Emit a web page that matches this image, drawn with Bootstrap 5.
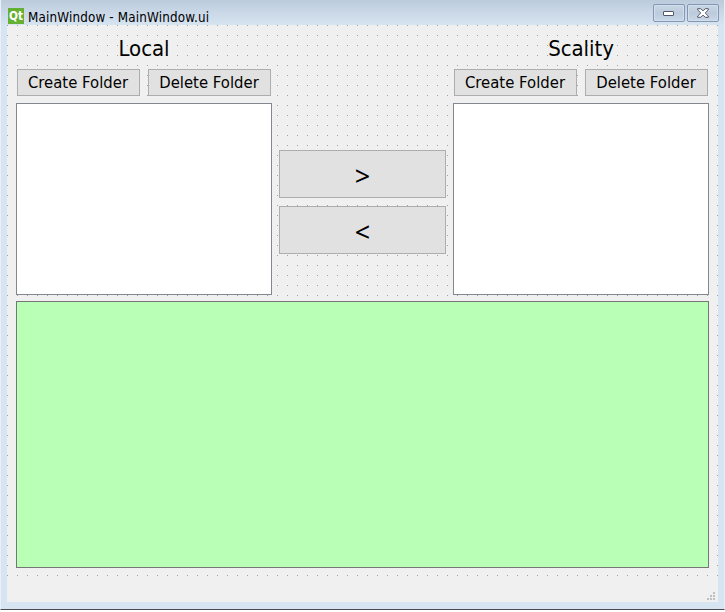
<!DOCTYPE html>
<html lang="en">
<head>
<meta charset="utf-8">
<title>MainWindow - MainWindow.ui</title>
<link href="https://cdn.jsdelivr.net/npm/bootstrap@5.3.0/dist/css/bootstrap.min.css" rel="stylesheet">
<style>
body{background:#fff;font-family:"DejaVu Sans Condensed","DejaVu Sans",sans-serif;font-stretch:condensed;color:#000;line-height:1}
.win{width:725px;height:610px;background:linear-gradient(#bccbdb,#d7e4f2 25px);border-bottom:1px solid #4b4b4f;border-left:1px solid #e9f0f8;border-right:1px solid #e4ecf6;padding:0 6px 7px 6px}
.titlebar{height:25px;margin-right:-1px}
.qt{width:16px;height:16px;margin:8px 4px 0 1px}
.caption{font-size:13.3px;letter-spacing:.17px;margin-top:11px;white-space:nowrap}
.ctl{width:32px;height:18px;margin-top:4px;border:1px solid #8595b4;border-radius:2px;background:linear-gradient(#c9d6e4,#bccbdc 50%,#c9d8e8);box-shadow:inset 0 0 0 1px #d3dfeb}
.client{position:relative;height:577px;background-color:#f0f0f0;padding:8px 9px 0}
.side{width:256px}
.head{height:36px;font-size:22px;padding-top:5px;letter-spacing:-.05px}
.tools{height:27px;padding:0 1px}
.tool{width:123px;padding:2px 1px 0 0;border:1px solid #adadad;border-radius:0;background:#e1e1e1;font-size:16.5px;letter-spacing:.02px;color:#000;line-height:1}
.pane{height:192px;margin-top:7px;background:#fff;border:1px solid #828790}
.mid{width:167px;padding-top:117px}
.move{height:48px;padding:3px 0 0;border:1px solid #adadad;border-radius:0;background:#e1e1e1;color:#000;font-family:"Noto Sans",sans-serif;font-size:27px;line-height:1}
.log{height:267px;margin-top:6px;background:#baffb6;border:1px solid #767676}
.dots{position:absolute;left:0;top:0}
.body-grid{position:relative}
.grip{position:absolute;right:3px;bottom:2px}
</style>
</head>
<body>
<div class="win">
 <header class="titlebar d-flex align-items-start">
  <svg class="qt" viewBox="0 0 16 16"><rect width="16" height="16" fill="#65b032"/><text x="1" y="12" font-size="13" font-weight="bold" textLength="14" lengthAdjust="spacingAndGlyphs" fill="#fff">Qt</text></svg>
  <div class="caption me-auto">MainWindow - MainWindow.ui</div>
  <div class="d-flex" style="gap:2px">
   <div class="ctl d-flex"><svg class="m-auto" width="12" height="6"><rect x=".5" y="1.5" width="10" height="4" rx=".5" fill="#fff" stroke="#535666"/></svg></div>
   <div class="ctl d-flex"><svg class="m-auto" width="12" height="10" viewBox="0 0 12 10"><path d="M.7.7H3.8L6 2.9 8.2.7h3.1V2L8.2 5l3.1 3v1.3H8.2L6 7.1 3.8 9.3H.7V8l3.1-3L.7 2Z" fill="#fff" stroke="#535666"/></svg></div>
  </div>
 </header>
 <main class="client">
  <svg class="dots" width="711" height="555"><defs><pattern id="g" width="10" height="10" patternUnits="userSpaceOnUse"><rect width="1" height="1" fill="#a0a0a0"/></pattern></defs><rect width="711" height="555" fill="url(#g)"/></svg>
  <div class="body-grid">
   <div class="d-flex justify-content-between">
    <section class="side">
     <div class="head text-center">Local</div>
     <div class="tools d-flex justify-content-between"><button class="tool btn">Create Folder</button><button class="tool btn">Delete Folder</button></div>
     <div class="pane"></div>
    </section>
    <div class="mid d-flex flex-column gap-2"><button class="move btn">&gt;</button><button class="move btn">&lt;</button></div>
    <section class="side">
     <div class="head text-center">Scality</div>
     <div class="tools d-flex justify-content-between"><button class="tool btn">Create Folder</button><button class="tool btn">Delete Folder</button></div>
     <div class="pane"></div>
    </section>
   </div>
   <div class="log"></div>
  </div>
  <svg class="grip" width="8" height="8" fill="#bfbfbf"><path d="M6 0h2v2H6zM3 3h2v2H3zM6 3h2v2H6zM0 6h2v2H0zM3 6h2v2H3zM6 6h2v2H6z"/></svg>
 </main>
</div>
<script src="https://cdn.jsdelivr.net/npm/bootstrap@5.3.0/dist/js/bootstrap.bundle.min.js"></script>
</body>
</html>
